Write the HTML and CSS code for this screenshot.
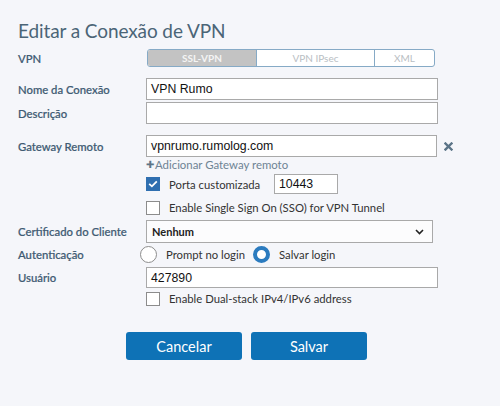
FILE: index.html
```html
<!DOCTYPE html>
<html lang="pt">
<head>
<meta charset="utf-8">
<link rel="stylesheet" href="styles.css">
</head>
<body>
<div class="dialog">
  <h1 class="title">Editar a Conexão de VPN</h1>
  <div class="form">
    <div class="row row-vpn">
      <div class="label">VPN</div>
      <div class="seg">
        <span class="seg-item seg-active seg-ssl">SSL-VPN</span>
        <span class="seg-item seg-ipsec">VPN IPsec</span>
        <span class="seg-item seg-xml">XML</span>
      </div>
    </div>
    <div class="row row-nome">
      <div class="label">Nome da Conexão</div>
      <div class="input wide">VPN Rumo</div>
    </div>
    <div class="row row-desc">
      <div class="label">Descrição</div>
      <div class="input wide"></div>
    </div>
    <div class="row row-gw">
      <div class="label">Gateway Remoto</div>
      <div class="input gw">vpnrumo.rumolog.com</div>
      <svg class="remove" width="9" height="9" viewBox="0 0 9 9"><path d="M1.5 1.5 L7.5 7.5 M7.5 1.5 L1.5 7.5" stroke="#5b7487" stroke-width="2.4" stroke-linecap="square"/></svg>
    </div>
    <div class="row row-add">
      <div class="label"></div>
      <div class="add"><span class="plus">✚</span>Adicionar Gateway remoto</div>
    </div>
    <div class="row row-porta">
      <div class="label"></div>
      <span class="check checked"><svg width="10" height="8" viewBox="0 0 10 8"><path d="M1.2 3.8 L3.9 6.3 L8.8 1.3" fill="none" stroke="#fff" stroke-width="1.8"/></svg></span>
      <span class="opt opt-porta">Porta customizada</span>
      <div class="input port">10443</div>
    </div>
    <div class="row row-sso">
      <div class="label"></div>
      <span class="check"></span>
      <span class="opt">Enable Single Sign On (SSO) for VPN Tunnel</span>
    </div>
    <div class="row row-cert">
      <div class="label">Certificado do Cliente</div>
      <div class="select">
        <span>Nenhum</span>
        <svg width="9" height="6" viewBox="0 0 9 6"><path d="M1 1 L4.5 4.5 L8 1" fill="none" stroke="#222" stroke-width="1.6"/></svg>
      </div>
    </div>
    <div class="row row-auth">
      <div class="label">Autenticação</div>
      <span class="radio"></span>
      <span class="opt opt-prompt">Prompt no login</span>
      <span class="radio on"></span>
      <span class="opt">Salvar login</span>
    </div>
    <div class="row row-user">
      <div class="label">Usuário</div>
      <div class="input user">427890</div>
    </div>
    <div class="row row-dual">
      <div class="label"></div>
      <span class="check"></span>
      <span class="opt">Enable Dual-stack IPv4/IPv6 address</span>
    </div>
  </div>
  <div class="buttons">
    <button class="btn">Cancelar</button>
    <button class="btn">Salvar</button>
  </div>
</div>
</body>
</html>
```

FILE: styles.css
```css
html, body {
  margin: 0;
  padding: 0;
  background: #f5f6fa;
}
body {
  width: 500px;
  height: 406px;
  overflow: hidden;
  font-family: Lato, "Liberation Sans", sans-serif;
}
.dialog {
  padding: 19px 0 0 18px;
}
.title {
  margin: 0;
  font-size: 19px;
  font-weight: 400;
  color: #4b6577;
  line-height: 24px;
  letter-spacing: -0.1px;
}
.form {
  display: flex;
  flex-direction: column;
  margin-top: 6px;
}
.row {
  display: flex;
  align-items: center;
  white-space: nowrap;
}
.label {
  width: 128px;
  flex: none;
  font-size: 11.3px;
  color: #3f5b73;
  font-weight: 500;
  -webkit-text-stroke: 0.2px #3f5b73;
}
.row-vpn { height: 18px; }
.row-nome { height: 22px; margin-top: 11px; }
.row-desc { height: 22px; margin-top: 2px; }
.row-gw { height: 22px; margin-top: 11px; }
.row-add { height: 14px; margin-top: 0px; }
.row-porta { height: 20px; margin-top: 3px; }
.row-sso { height: 15px; margin-top: 6px; }
.row-cert { height: 23px; margin-top: 5px; }
.row-auth { height: 19px; margin-top: 2px; }
.row-user { height: 21px; margin-top: 3px; }
.row-dual { height: 15px; margin-top: 3px; }

.seg {
  display: flex;
  height: 18px;
  width: 288px;
  border: 1px solid #86aac6;
  border-radius: 3px;
  box-sizing: border-box;
  overflow: hidden;
  background: #fff;
  margin-left: 1px;
}
.seg-item {
  display: flex;
  align-items: center;
  justify-content: center;
  font-size: 10px;
  color: #b9bec3;
}
.seg-ssl { width: 108px; }
.seg-ipsec { width: 117px; border-left: 1px solid #86aac6; border-right: 1px solid #86aac6; }
.seg-xml { flex: 1; }
.seg-active {
  background: #c3c3c3;
  color: #f4f4f4;
  font-weight: 700;
}

.input {
  height: 22px;
  box-sizing: border-box;
  border: 1px solid #a9a9a9;
  background: #fff;
  font-family: "Liberation Sans", Arial, sans-serif;
  font-size: 12.3px;
  color: #111;
  padding: 0 4px;
  display: flex;
  align-items: center;
}
.wide { width: 292px; }
.gw { width: 291px; }
.user { width: 292px; height: 21px; }
.port { width: 64px; height: 20px; margin-left: 0; }
.remove { margin-left: 7px; }

.add {
  font-size: 11.4px;
  color: #6e8394;
  display: flex;
  align-items: center;
}
.plus {
  font-size: 10px;
  color: #5e7587;
  margin-right: 1px;
}

.check {
  width: 14px;
  height: 14px;
  box-sizing: border-box;
  border: 1px solid #8c8c8c;
  background: #fff;
  flex: none;
  display: flex;
  align-items: center;
  justify-content: center;
}
.check.checked {
  background: #2f6fb0;
  border-color: #2f6fb0;
}
.opt {
  font-size: 11.3px;
  color: #333;
  margin-left: 9px;
}
.opt-porta { width: 105px; }

.select {
  width: 287px;
  height: 23px;
  box-sizing: border-box;
  border: 1px solid #a9a9a9;
  background: #fcfcfd;
  font-size: 11px;
  font-weight: 700;
  color: #222;
  display: flex;
  align-items: center;
  justify-content: space-between;
  padding: 0 8px 0 5px;
}

.radio {
  width: 17px;
  height: 17px;
  box-sizing: border-box;
  border-radius: 50%;
  border: 1px solid #8d8d8d;
  background: #fff;
  flex: none;
  margin-left: -6px;
}
.radio.on {
  border: 4px solid #2b7bbf;
  margin-left: 8px;
}
.opt-prompt { margin-left: 9px; }

.buttons {
  display: flex;
  gap: 9px;
  margin-top: 26px;
  margin-left: 108px;
}
.btn {
  width: 116px;
  height: 28px;
  border: none;
  border-radius: 3px;
  background: #0e72b6;
  color: #fff;
  font-family: Lato, "Liberation Sans", sans-serif;
  font-size: 14.5px;
  padding: 0;
}
```
